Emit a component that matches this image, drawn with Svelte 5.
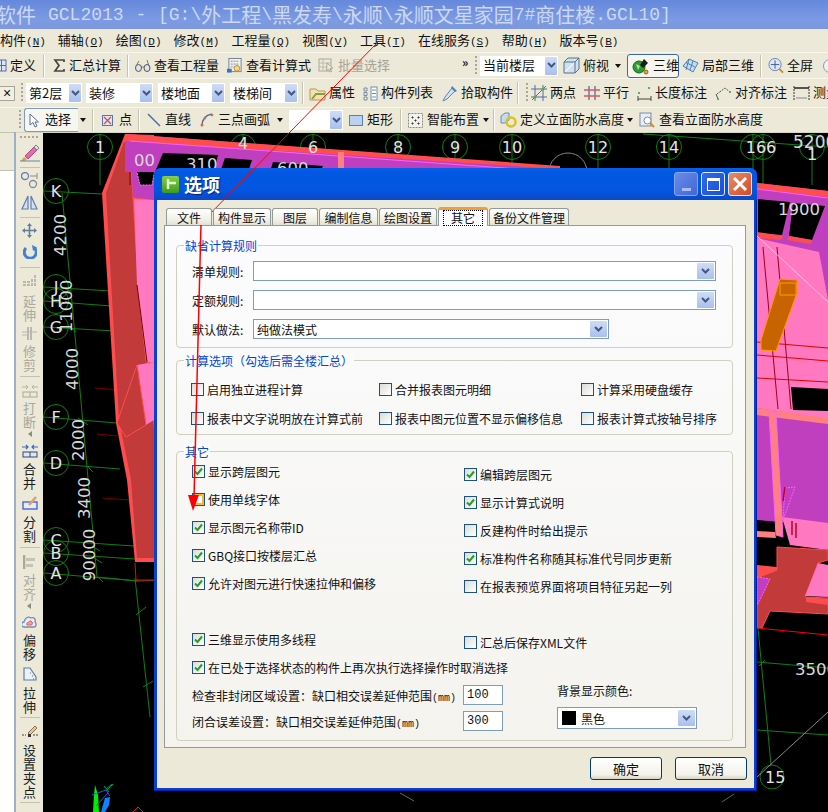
<script>
	const menus = [
		['构件', 'N'], ['辅轴', 'O'], ['绘图', 'D'], ['修改', 'M'], ['工程量', 'Q'],
		['视图', 'V'], ['工具', 'T'], ['在线服务', 'S'], ['帮助', 'H'], ['版本号', 'B']
	];

	const bar1 = [
		{ w: 51, iw: 15, icon: icoGrid, label: '定义' },
		{ kind: 'sep', w: 9 },
		{ w: 75, iw: 14, icon: icoSigma, label: '汇总计算' },
		{ kind: 'sep', w: 8 },
		{ w: 92, iw: 16, icon: icoGlasses, label: '查看工程量' },
		{ w: 91, iw: 16, icon: icoCalc, label: '查看计算式' },
		{ w: 144, iw: 17, icon: icoBatch, label: '批量选择', off: true },
		{ kind: 'more', w: 10 },
		{ kind: 'grip', w: 8 },
		{ kind: 'select', w: 78, text: '当前楼层' },
		{ kind: 'space', w: 5 },
		{ w: 64, iw: 17, icon: icoCube, label: '俯视', arrow: true },
		{ w: 52, iw: 18, icon: icoGlobe, label: '三维', on: true },
		{ kind: 'space', w: 3 },
		{ w: 78, iw: 17, icon: icoLocal, label: '局部三维' },
		{ kind: 'sep', w: 8 },
		{ w: 54, iw: 16, icon: icoZoom, label: '全屏' },
		{ w: 20, iw: 16, icon: icoRound }
	];

	const bar2 = [
		{ kind: 'closer', w: 15 },
		{ kind: 'space', w: 2 },
		{ kind: 'grip', w: 9 },
		{ kind: 'select', w: 56, text: '第2层' },
		{ kind: 'space', w: 4 },
		{ kind: 'select', w: 67, text: '装修' },
		{ kind: 'space', w: 5 },
		{ kind: 'select', w: 67, text: '楼地面' },
		{ kind: 'space', w: 5 },
		{ kind: 'select', w: 68, text: '楼梯间' },
		{ kind: 'space', w: 4 },
		{ kind: 'sep', w: 7 },
		{ w: 53, iw: 17, icon: icoFolder, label: '属性' },
		{ w: 79, iw: 16, icon: icoList, label: '构件列表' },
		{ w: 76, iw: 17, icon: icoDropper, label: '拾取构件' },
		{ kind: 'sep', w: 5 },
		{ kind: 'grip', w: 9 },
		{ w: 52, iw: 16, icon: icoTwoPt, label: '两点' },
		{ w: 54, iw: 17, icon: icoParallel, label: '平行' },
		{ w: 78, iw: 15, icon: icoLength, label: '长度标注' },
		{ w: 78, iw: 17, icon: icoAlign, label: '对齐标注' },
		{ w: 40, iw: 17, icon: icoMeasure, label: '测量' }
	];

	const bar3 = [
		{ kind: 'space', w: 16 },
		{ kind: 'grip', w: 8 },
		{ w: 54, iw: 16, icon: icoPointer, label: '选择', sel: true },
		{ kind: 'arrow', w: 14 },
		{ kind: 'sep', w: 10 },
		{ w: 36, iw: 11, gap: 6, icon: icoPoint, label: '点' },
		{ kind: 'sep', w: 9 },
		{ w: 53, iw: 14, gap: 4, icon: icoLine, label: '直线' },
		{ w: 89, iw: 14, gap: 4, icon: icoArc, label: '三点画弧', arrow: true },
		{ kind: 'select', w: 54, text: '' },
		{ kind: 'space', w: 6 },
		{ w: 51, iw: 14, gap: 4, icon: icoRect, label: '矩形' },
		{ kind: 'sep', w: 8 },
		{ w: 85, iw: 15, gap: 4, icon: icoSmart, label: '智能布置', arrow: true },
		{ kind: 'sep', w: 7 },
		{ w: 139, iw: 17, icon: icoRing, label: '定义立面防水高度', arrow: true },
		{ w: 130, iw: 16, gap: 4, icon: icoPage, label: '查看立面防水高度' }
	];

	const side = [
		{ kind: 'grip' },
		{ h: 24, icon: vBrush },
		{ kind: 'sep', h: 5 },
		{ h: 20, icon: vCopy },
		{ h: 24, icon: vMirror },
		{ kind: 'sep', h: 6 },
		{ h: 20, icon: vMove },
		{ h: 24, icon: vRotate },
		{ kind: 'sep', h: 6 },
		{ h: 24, icon: vExtend, text: '延伸', off: true },
		{ h: 22, icon: vTrim, text: '修剪', off: true },
		{ kind: 'sep', h: 9 },
		{ h: 20, icon: vBreak, text: '打断', off: true, arrow: true },
		{ h: 23, icon: vMerge, text: '合并' },
		{ h: 25, icon: vSplit, text: '分割' },
		{ kind: 'sep', h: 8 },
		{ h: 22, icon: vFlush, text: '对齐', off: true, arrow: true },
		{ h: 22, icon: vOffset, text: '偏移' },
		{ h: 25, icon: vStretch, text: '拉伸' },
		{ kind: 'sep', h: 7 },
		{ h: 22, icon: vGrip, text: '设置夹点' },
		{ kind: 'sep', h: 6 }
	];

	const tabs = [
		['文件', 46], ['构件显示', 58], ['图层', 46], ['编制信息', 59],
		['绘图设置', 58], ['其它', 50], ['备份文件管理', 80]
	];

	const calcOpts = [
		'启用独立进程计算', '合并报表图元明细', '计算采用硬盘缓存',
		'报表中文字说明放在计算式前', '报表中图元位置不显示偏移信息', '报表计算式按轴号排序'
	];

	const otherLeft = [
		{ t: '显示跨层图元', c: true },
		{ t: '使用单线字体', hot: true },
		{ t: '显示图元名称带ID', c: true },
		{ t: 'GBQ接口按楼层汇总', c: true },
		{ t: '允许对图元进行快速拉伸和偏移', c: true },
		null,
		{ t: '三维显示使用多线程', c: true },
		{ t: '在已处于选择状态的构件上再次执行选择操作时取消选择', c: true }
	];

	const otherRight = [
		{ t: '编辑跨层图元', c: true },
		{ t: '显示计算式说明', c: true },
		{ t: '反建构件时给出提示' },
		{ t: '标准构件名称随其标准代号同步更新', c: true },
		{ t: '在报表预览界面将项目特征另起一列' },
		null,
		{ t: '汇总后保存XML文件' }
	];

	const topAxes = [
		[100, '1'], [243, '4'], [313, '6'], [398, '8'], [455, '9'], [512, '10'],
		[598, '12'], [669, '14'], [753, ''], [763, ''], [812, '']
	];

	const leftAxes = [
		['K', 191, 102, 194], ['J', 287, 111, 291], ['H', 301, 112, 306], ['G', 327, 115, 331],
		['F', 417, 117, 423], ['D', 463, 120, 469], ['C', 540, 134, 546], ['B', 553, 135, 559], ['A', 573, 138, 581]
	];

	const dims = [
		['4200', 66, 235], ['11000', 72, 306], ['4000', 78, 369], ['2000', 84, 440], ['3400', 90, 498], ['90000', 95, 555]
	];
</script>

{#snippet chevron()}
	<span class="chev"><svg width="9" height="7" viewBox="0 0 9 7"><path d="M1 1l3.5 3.5L8 1" fill="none" stroke="#43587f" stroke-width="2" /></svg></span>
{/snippet}

{#snippet check(on, hot)}
	<span class="cb" class:hot>
		{#if on}<svg width="11" height="11" viewBox="0 0 11 11"><path d="M2 5.500l2.500 2.500L9 2.500" fill="none" stroke="#21a121" stroke-width="2" /></svg>{/if}
	</span>
{/snippet}

{#snippet icoGrid()}<svg width="15" height="15" viewBox="0 0 15 15"><rect x="1" y="2" width="13" height="11" fill="#dfe6f3" stroke="#4c6fb0" /><path d="M5 2v11M9.500 2v11M1 7.500h13" stroke="#4c6fb0" /></svg>{/snippet}
{#snippet icoSigma()}<svg width="12" height="13" viewBox="0 0 12 13"><path d="M11 3V1H2l4 5.500L2 12h9v-2" fill="none" stroke="#444" stroke-width="1.700" /></svg>{/snippet}
{#snippet icoGlasses()}<svg width="16" height="14" viewBox="0 0 16 14"><ellipse cx="3.500" cy="9" rx="3" ry="3.500" fill="#dfe3ec" stroke="#555" /><ellipse cx="12" cy="9" rx="3" ry="3.500" fill="#dfe3ec" stroke="#555" /><path d="M6.500 8h2.500M1 7l3-5M14 7l-2-6" stroke="#777" fill="none" /></svg>{/snippet}
{#snippet icoCalc()}<svg width="17" height="17" viewBox="0 0 17 17"><rect x="2" y="1" width="13" height="14" fill="#f1efe6" stroke="#6f7f9c" /><path d="M4 4h9M4 7h9M4 10h4" stroke="#7d8ba5" stroke-dasharray="2 1" /><circle cx="10.500" cy="11.500" r="3" fill="#f4d78a" stroke="#b98c2c" /><rect x="0" y="12" width="5" height="4" fill="#3d6fc4" /></svg>{/snippet}
{#snippet icoBatch()}<svg width="17" height="17" viewBox="0 0 17 17"><rect x="1" y="2" width="12" height="12" fill="none" stroke="#aaa89a" /><path d="M1 6h12M1 10h12M5 2v12" stroke="#bdbbac" /><path d="M9 6l6 5-3 .5 1.500 3-1.500.5-1.500-3-2 2z" fill="#ece9d8" stroke="#aaa89a" /></svg>{/snippet}
{#snippet icoCube()}<svg width="17" height="17" viewBox="0 0 17 17"><path d="M1 5l4-4h11v11l-4 4H1z" fill="#cfe2f2" stroke="#5d7187" /><path d="M1 5h11v11M12 5l4-4" fill="none" stroke="#5d7187" /><path d="M2 15l9-9" stroke="#fff" /></svg>{/snippet}
{#snippet icoGlobe()}<svg width="18" height="18" viewBox="0 0 18 18"><circle cx="7" cy="10" r="6" fill="#2e9a3c" stroke="#0e6a20" /><path d="M4 7l4 2-2 4z" fill="#b5e58f" /><path d="M12 2l4 4-5 5-3-3z" fill="#1c1c1c" /><circle cx="14" cy="15" r="2" fill="#e8a13c" stroke="#9b6414" /></svg>{/snippet}
{#snippet icoLocal()}<svg width="17" height="15" viewBox="0 0 17 15"><path d="M1 8l6-7 9 4-5 9z" fill="#c6dcf2" stroke="#4f7fb2" /><path d="M4 4.500l9 4.500M7 1l-3 11M11 3l-3 9" stroke="#4f7fb2" fill="none" /></svg>{/snippet}
{#snippet icoZoom()}<svg width="17" height="17" viewBox="0 0 17 17"><circle cx="7.500" cy="7.500" r="6.500" fill="#dce6f6" stroke="#6984ac" /><path d="M7.500 3v9M3 7.500h9" stroke="#3c5e94" /><path d="M12 12l4 4" stroke="#c68c38" stroke-width="2" /></svg>{/snippet}
{#snippet icoRound()}<svg width="16" height="16" viewBox="0 0 16 16"><circle cx="8" cy="8" r="6.500" fill="#f2f2f2" stroke="#8a97ad" /></svg>{/snippet}
{#snippet icoFolder()}<svg width="17" height="15" viewBox="0 0 17 15"><path d="M1 3h6l2 2h7v9H1z" fill="#f4e2a8" stroke="#b09a5e" /><path d="M3 13l4-5h9" fill="none" stroke="#7fa04e" stroke-width="2" /></svg>{/snippet}
{#snippet icoList()}<svg width="15" height="15" viewBox="0 0 15 15"><rect x="8" y="1" width="6" height="13" fill="#fff" stroke="#6c8fb6" /><path d="M9 4h4M9 7.500h4M9 11h4" stroke="#6c8fb6" /><path d="M1 2h3v3H1zM1 6.500h3v3H1zM1 11h3v3H1z" fill="#e8edf5" stroke="#7b8a9c" /></svg>{/snippet}
{#snippet icoDropper()}<svg width="16" height="17" viewBox="0 0 16 17"><path d="M10 3l3 3-8 8-4 2 2-4z" fill="#cfe3f7" stroke="#5f85b6" /><path d="M10 1l5 5-2 1-4-4z" fill="#4f7fba" /></svg>{/snippet}
{#snippet icoTwoPt()}<svg width="16" height="16" viewBox="0 0 16 16"><path d="M4 0v16M12 0v16M0 4h16M0 12h16" stroke="#5868a4" /><path d="M1 15L15 1" stroke="#d93a3a" /><circle cx="4" cy="12" r="1.500" fill="#5aa83c" /><circle cx="12" cy="4" r="1.500" fill="#5aa83c" /></svg>{/snippet}
{#snippet icoParallel()}<svg width="16" height="16" viewBox="0 0 16 16"><path d="M5 1v14M11 1v14" stroke="#6a78ad" stroke-width="1.500" /><path d="M0 5h16M0 11h16" stroke="#d85a5a" stroke-width="1.500" /></svg>{/snippet}
{#snippet icoLength()}<svg width="15" height="15" viewBox="0 0 15 15"><path d="M1 10v5M14 10v5M1 13h13" stroke="#444" /><rect x="11" y="1" width="2" height="2" fill="#58b458" /><rect x="1" y="6" width="2" height="2" fill="#58b458" /></svg>{/snippet}
{#snippet icoAlign()}<svg width="17" height="15" viewBox="0 0 17 15"><path d="M2 8l8-6 5 4" fill="none" stroke="#555" stroke-dasharray="2 1" /><path d="M3 13L1 8" stroke="#555" /><rect x="2" y="12" width="2" height="2" fill="#58b458" /><rect x="14" y="5" width="2" height="2" fill="#58b458" /></svg>{/snippet}
{#snippet icoMeasure()}<svg width="17" height="16" viewBox="0 0 17 16"><path d="M1 1v14M16 1v14" stroke="#333" stroke-dasharray="2 1" /><path d="M1 3h15" stroke="#222" stroke-width="1.500" /><path d="M3 13h11" stroke="#888" /></svg>{/snippet}
{#snippet icoPointer()}<svg width="10" height="15" viewBox="0 0 10 15"><path d="M1 1v11l3-2.500 2 4.500 2-1-2-4h3.500z" fill="#fff" stroke="#5a6e96" /></svg>{/snippet}
{#snippet icoPoint()}<svg width="11" height="11" viewBox="0 0 11 11"><rect x=".5" y=".5" width="10" height="10" fill="#dfe6f3" stroke="#5d74a8" /><path d="M2 2l7 7M9 2l-7 7" stroke="#d05050" stroke-width="1.300" /></svg>{/snippet}
{#snippet icoLine()}<svg width="14" height="14" viewBox="0 0 14 14"><path d="M1 1l12 12" stroke="#4c6fa8" stroke-width="1.500" /></svg>{/snippet}
{#snippet icoArc()}<svg width="14" height="14" viewBox="0 0 14 14"><path d="M2 13C2 6 6 2 12 1" fill="none" stroke="#4c6fa8" stroke-width="1.500" /><circle cx="2" cy="12" r="1.500" fill="#d06a50" /><circle cx="5" cy="5" r="1.300" fill="#d06a50" /><circle cx="12" cy="2" r="1.300" fill="#d06a50" /></svg>{/snippet}
{#snippet icoRect()}<svg width="14" height="11" viewBox="0 0 14 11"><rect x=".5" y=".5" width="13" height="10" fill="#bcd0f2" stroke="#5d7fb8" /></svg>{/snippet}
{#snippet icoSmart()}<svg width="15" height="15" viewBox="0 0 15 15"><rect x=".5" y=".5" width="14" height="14" fill="#f3f3ee" stroke="#8c8c86" stroke-dasharray="2 1" /><path d="M4 4h1v1H4zM10 4h1v1h-1zM4 10h1v1H4zM10 10h1v1h-1zM7 7h1v1H7z" stroke="#333" /></svg>{/snippet}
{#snippet icoRing()}<svg width="17" height="16" viewBox="0 0 17 16"><path d="M1 4l4-3h4v7l-4 3H1z" fill="#c7d8ef" stroke="#7489aa" /><circle cx="11" cy="10" r="4.500" fill="none" stroke="#d8c224" stroke-width="2.500" /></svg>{/snippet}
{#snippet icoPage()}<svg width="16" height="16" viewBox="0 0 16 16"><rect x="1" y="1" width="11" height="13" fill="#e8ecf4" stroke="#7d8ca8" /><circle cx="8.500" cy="8.500" r="3.500" fill="#fff" stroke="#7d8ca8" /><path d="M11 11l4 4" stroke="#c68c38" stroke-width="2" /></svg>{/snippet}

{#snippet vBrush()}<svg width="22" height="18" viewBox="0 0 22 18"><path d="M2 17l3-4 3 2-2 2z" fill="#e0a050" /><path d="M6 12l9-9 3 3-9 9z" fill="#e86aa6" stroke="#a84a7c" /><path d="M15 3l2-2 3 3-2 2z" fill="#d7e6f5" stroke="#6785a7" /><path d="M1 17h20" stroke="#6785a7" /></svg>{/snippet}
{#snippet vCopy()}<svg width="18" height="17" viewBox="0 0 18 17"><circle cx="4" cy="4" r="3.500" fill="#e4e8ef" stroke="#6b80a3" stroke-width="1.300" /><circle cx="12" cy="12" r="3.500" fill="#e4e8ef" stroke="#8d8d86" stroke-width="1.300" /><path d="M9 4h7M16 1v6" stroke="#8d8d86" fill="none" /></svg>{/snippet}
{#snippet vMirror()}<svg width="17" height="15" viewBox="0 0 17 15"><path d="M7 1L1 14h6zM10 1l6 13h-6z" fill="#d6e0f2" stroke="#5b7fb6" stroke-width="1.200" /></svg>{/snippet}
{#snippet vMove()}<svg width="15" height="15" viewBox="0 0 15 15"><path d="M7.500 0l2.500 3H8.300v3.700H12V5l3 2.500-3 2.500V8.300H8.300V12H10l-2.500 3L5 12h1.700V8.300H3V10L0 7.500 3 5v1.700h3.700V3H5z" fill="#5f7f9e" /></svg>{/snippet}
{#snippet vRotate()}<svg width="14" height="14" viewBox="0 0 14 14"><path d="M3 3a6 6 0 1 0 8.500 0" fill="none" stroke="#3e82d0" stroke-width="3" /><path d="M9 0l1 6 4-3.500z" fill="#3e82d0" /></svg>{/snippet}
{#snippet vExtend()}<svg width="15" height="15" viewBox="0 0 15 15"><path d="M13 0v12M1 7h7M1 10h7M10 4v8" stroke="#a9a89c" stroke-width="1.500" stroke-dasharray="3 1" fill="none" /></svg>{/snippet}
{#snippet vTrim()}<svg width="15" height="13" viewBox="0 0 15 13"><path d="M6 0v13M9 0v13" stroke="#a9a89c" stroke-width="1.500" /><path d="M0 5h15M0 8h6" stroke="#b8b7ab" /></svg>{/snippet}
{#snippet vBreak()}<svg width="16" height="14" viewBox="0 0 16 14"><path d="M0 3h6M10 3h6M4 1L6 3 4 5M12 1L10 3l2 2" stroke="#b4b3a7" fill="none" /><rect x="1" y="8" width="14" height="5" fill="none" stroke="#a9a89c" /><path d="M8 8v5" stroke="#a9a89c" /></svg>{/snippet}
{#snippet vMerge()}<svg width="16" height="14" viewBox="0 0 16 14"><path d="M0 3h6M10 3h6M4 1l2 2-2 2M12 1l-2 2 2 2" stroke="#3768c7" fill="none" stroke-width="1.200" /><rect x="1" y="8" width="14" height="5" fill="#dfe6f3" stroke="#33496f" /><path d="M8 8v5" stroke="#33496f" /></svg>{/snippet}
{#snippet vSplit()}<svg width="16" height="14" viewBox="0 0 16 14"><rect x="1" y="6" width="14" height="7" fill="#e6ecf8" stroke="#3d5fd0" stroke-width="1.300" /><path d="M7 9l7-8" stroke="#d7a46c" stroke-width="2.500" /></svg>{/snippet}
{#snippet vFlush()}<svg width="13" height="14" viewBox="0 0 13 14"><path d="M1 0v14" stroke="#a9a89c" stroke-width="2.500" /><rect x="3" y="3" width="9" height="3" fill="#c4c3b6" /><rect x="3" y="9" width="7" height="3" fill="#c4c3b6" /></svg>{/snippet}
{#snippet vOffset()}<svg width="15" height="12" viewBox="0 0 15 12"><path d="M2 11a2 2 0 0 1 0-5C3 2 6 0 9 2c3-1 5 1 4 4 2 2 1 5-1 5z" fill="#e8edf5" stroke="#6c8fb6" stroke-width="1.300" /><path d="M5 9c-1-2 1-3 2-3s0-2 2-1 2 4 0 4z" fill="#f29b9b" stroke="#d66" /></svg>{/snippet}
{#snippet vStretch()}<svg width="14" height="14" viewBox="0 0 14 14"><path d="M1 1h6l6 9v3H1z" fill="#edf1f7" stroke="#5b7fa9" stroke-width="1.200" /><path d="M9 9h1M10 12h1M7 6h1" stroke="#666" /></svg>{/snippet}
{#snippet vGrip()}<svg width="16" height="14" viewBox="0 0 16 14"><path d="M6 8l7-7 2 2-7 7z" fill="#e4c89a" stroke="#8a7350" /><path d="M0 10h4M11 10h5" stroke="#444" stroke-dasharray="2 1" /><rect x="6" y="9" width="3" height="3" fill="#333" /></svg>{/snippet}

{#snippet toolbar(items)}
	{#each items as it}
		{#if it.kind === 'sep'}
			<span class="cell sep" style="width:{it.w}px"></span>
		{:else if it.kind === 'space'}
			<span class="cell" style="width:{it.w}px"></span>
		{:else if it.kind === 'grip'}
			<span class="cell grip" style="width:{it.w}px"></span>
		{:else if it.kind === 'more'}
			<span class="cell more" style="width:{it.w}px">»</span>
		{:else if it.kind === 'arrow'}
			<span class="cell" style="width:{it.w}px"><i class="drop first"></i></span>
		{:else if it.kind === 'closer'}
			<span class="cell closer" style="width:{it.w}px">×</span>
		{:else if it.kind === 'select'}
			<span class="cell bar-select" style="width:{it.w}px"><span>{it.text}</span>{@render chevron()}</span>
		{:else}
			<span
				class="cell tool"
				class:off={it.off}
				class:on={it.on}
				class:sel={it.sel}
				style="width:{it.w}px;gap:{it.gap ?? 3}px"
			>
				<span class="ico" style="width:{it.iw}px">{@render it.icon()}</span>
				{#if it.label}<span class="nowrap lift">{it.label}</span>{/if}
				{#if it.arrow}<i class="drop"></i>{/if}
			</span>
		{/if}
	{/each}
{/snippet}

<div class="app">
	<header class="title">
		<span>软件</span><span class="m first">GCL2013 - [G:\</span><span>外工程</span><span class="m">\</span><span>黑发寿</span><span class="m">\</span><span>永顺</span><span class="m">\</span><span>永顺文星家园</span><span class="m">7#</span><span>商住楼</span><span class="m">.GCL10]</span>
	</header>

	<nav class="menu">
		{#each menus as [name, key]}
			<span class="menu-item">{name}<span class="k">(<u>{key}</u>)</span></span>
		{/each}
	</nav>

	<div class="bar bar1">{@render toolbar(bar1)}</div>
	<div class="bar bar2">{@render toolbar(bar2)}</div>
	<div class="bar bar3">{@render toolbar(bar3)}</div>

	<div class="main">
		<aside class="pane">
			<div class="pane-head"></div>
			<div class="pane-list"></div>
		</aside>

		<div class="vbar">
			{#each side as it}
				{#if it.kind === 'grip'}
					<span class="vgrip"></span>
				{:else if it.kind === 'sep'}
					<span class="vsep" style="height:{it.h}px"></span>
				{:else}
					<div class="vitem" class:off={it.off}>
						<span class="vico" style="height:{it.h}px">{@render it.icon()}</span>
						{#if it.text}
							{#each it.text as ch}<span class="vch">{ch}</span>{/each}
						{/if}
						{#if it.arrow}<i class="vdrop"></i>{/if}
					</div>
				{/if}
			{/each}
		</div>

		<div class="canvas">
			<svg width="785" height="679" viewBox="43 133 785 679" class="scene">
				<g fill="none" stroke="#0f7f0f">
					{#each topAxes as [x]}
						<circle cx={x} cy="147" r="12.500" />
						<path d="M{x} 134V185" />
					{/each}
					{#each leftAxes as [, y, x2, y2]}
						<circle cx="56" cy={y} r="12.500" />
						<path d="M44 {y}L{x2} {y2}" />
					{/each}
					<path d="M62 193L97 577M135 578L150 717" />
					<path d="M643 134L828 147" />
					<path d="M97 577L138 581L175 580" />
					<path d="M62 287l8 4M65 301l8 4M70 327l6 5M78 418l10 7M88 467l5 5M92 546l8 5M94 558l8 5M98 577l5 5" />
					<path d="M136 615l10-8M143 687l10-6" />
				</g>
				<circle cx="568" cy="172" r="19" fill="none" stroke="#888" />
				<path d="M95 388l25 2M97 434l20 2M103 498l27 2" stroke="#7a0000" fill="none" />

				<!-- building, left wing -->
				<polygon points="125,134 102,193 116,423 127,480 135,562 154,562 154,135" fill="#ff4d4d" />
				<polygon points="124,142 106,193 119,420 131,480 137,558 154,558 154,430 147,365 138,285 129,143" fill="#c23a3a" />
				<polygon points="130,141 154,144 154,200 133,197" fill="#bf3fbf" />
				<polygon points="134,199 154,200 154,362 146,362 137,285" fill="#ff78c0" />
				<polygon points="137,365 154,362 154,420 146,425" fill="#ff78c0" />
				<polygon points="137,365 117,423 126,437 146,425" fill="#c23a3a" stroke="#ff4d4d" />
				<polygon points="132,152 158,153 152,185 140,185" fill="#000" stroke="#ff78ff" stroke-dasharray="2 1" />
				<path d="M137 285L147 362M130 165v20" stroke="#7a0000" fill="none" />
				<path d="M135 563l1 17h18" stroke="#f00" fill="none" />

				<!-- top band -->
				<polygon points="125,134 560,167 560,172 125,172" fill="#bf3fbf" />
				<polygon points="125,134 560,166 560,169 125,141" fill="#ff4d4d" />
				<path d="M130 141L560 172" stroke="#ff60ff" fill="none" />
				<polygon points="163,153 218,155 214,172 155,172" fill="#000" />
				<polygon points="225,158 252,160 248,172 220,172" fill="#000" />
				<polygon points="273,162 323,166 320,172 270,172" fill="#000" />
				<rect x="338" y="152" width="6" height="20" fill="#ff8080" />
				<text x="134" y="166" class="num">00</text>
				<text x="186" y="170" class="num">310</text>
				<text x="277" y="174" class="num">600</text>

				<!-- right wing -->
				<polygon points="757,183 828,191 828,300 757,300" fill="#bf3fbf" />
				<polygon points="757,183 828,191 828,197 757,189" fill="#ff4d4d" />
				<path d="M757 189L828 198" stroke="#ff60ff" fill="none" />
				<polygon points="758,199 790,202 782,235 758,233" fill="#000" />
				<polygon points="793,203 825,206 812,240 789,236" fill="#000" />
				<polygon points="757,232 783,236 781,240 757,238" fill="#ff4d4d" />
				<polygon points="789,236 812,240 811,244 787,240" fill="#ff4d4d" />
				<polygon points="757,238 819,252 828,300 828,420 757,410" fill="#ff78c0" />
				<polygon points="791,387 828,389 828,411 793,410" fill="#000" />
				<path d="M757 342L828 348M757 355L828 361M757 378L828 382" stroke="#e00000" fill="none" />
				<path d="M763 247L778 409M777 247L791 409" stroke="#9b0020" fill="none" />
				<path d="M757 236L828 302" stroke="#ffc0f0" fill="none" />
				<polygon points="761,340 780,279 797,280 797,293 776,351 761,350" fill="#c86400" stroke="#ff9a00" />
				<path d="M780 283h16v12h-16z" fill="none" stroke="#ff9a00" />
				<polygon points="757,408 828,419 828,526 757,520" fill="#bf3fbf" />
				<polygon points="757,408 828,418 828,424 757,415" fill="#ff8080" />
				<polygon points="769,412 776,412 783,537 776,535" fill="#ff8080" stroke="#ff60ff" />
				<polygon points="757,531 775,532 776,538 757,537" fill="#ff8080" />
				<polygon points="782,517 828,523 828,550 790,545" fill="#ff78c0" />
				<polygon points="757,565 786,568 788,570 757,578" fill="#ff4d4d" />
				<polygon points="777,547 828,550 828,560 818,563 805,597 828,598 828,614 770,611 762,628 757,628 757,578 777,570" fill="#c23a3a" stroke="#ff4d4d" />
				<polygon points="818,563 828,565 828,597 805,596" fill="#ff78c0" />
				<path d="M806 597l22 2v6l-22-3z" fill="#ff4d4d" />
				<polygon points="757,577 770,579 760,600 757,605" fill="#bf3fbf" stroke="#ff60ff" stroke-dasharray="2 1" />
				<polygon points="785,488 795,487 783,520" fill="#bf3fbf" stroke="#ff60ff" stroke-dasharray="2 1" />
				<path d="M785 487l-2 14M792 521v14M796 523v15" stroke="#c00020" stroke-width="1.500" fill="none" />
				<path d="M757 628L828 635" stroke="#f00" fill="none" />
				<path d="M758 628L771 765M757 662L828 668M757 730L828 735M765 660l-6 6" stroke="#0f7f0f" fill="none" />
				<circle cx="772" cy="777" r="12" fill="none" stroke="#0f7f0f" />
				<path d="M757 777L828 712" stroke="#888" fill="none" />
				<text x="765" y="783" class="axis">15</text>
				<text x="795" y="675" class="num">3500</text>
				<text x="793" y="148" class="num big">5200</text>
				<text x="778" y="215" class="num">1900</text>

				{#each topAxes as [x, t]}
					{#if t && x !== 243}<text x={x} y="153" class="axis mid">{t}</text>{/if}
				{/each}
				<text x="243" y="149" class="axis mid">4</text>
				<text x="761" y="153" class="axis mid">166</text>
				<text x="812" y="160" class="axis mid">1</text>
				{#each leftAxes as [t, y]}
					<text x="56" y={y + 6} class="axis mid">{t}</text>
				{/each}
				{#each dims as [t, x, y]}
					<text {x} {y} class="num mid" transform="rotate(-90 {x} {y})">{t}</text>
				{/each}

				<!-- axis gizmo -->
				<polygon points="95,785 98,795 99,812 93,812 94,795" fill="#00ef00" />
				<polygon points="105,798 110,797 109,805 105,812 101,812" fill="#0a84ff" />
				<path d="M92 795l14-5 4 6M96 806l12-13M106 789l6-5" stroke="#2060e0" fill="none" />
				<path d="M107 790l6-6M104 786l5 6" stroke="#00b000" fill="none" />
				<path d="M133 812l5-5 5 5" stroke="#e02020" fill="none" />
				<path d="M400 793l14 8M722 802l12-8" stroke="#666" fill="none" />
			</svg>
		</div>
	</div>

	<section class="dialog">
		<div class="dlg-title">
			<span class="dlg-logo"><svg width="14" height="14" viewBox="0 0 14 14"><path d="M4 2v10M4 6h8" stroke="#e6f5cf" stroke-width="2.500" fill="none" /></svg></span>
			<span class="dlg-name">选项</span>
			<span class="win-btns">
				<span class="wb min"><i></i></span>
				<span class="wb max"><i></i></span>
				<span class="wb close">
					<svg width="16" height="16" viewBox="0 0 16 16"><path d="M2 2l12 12M14 2L2 14" stroke="#fff" stroke-width="3" /></svg>
				</span>
			</span>
		</div>

		<div class="dlg-body">
			<div class="tabs">
				{#each tabs as [name, w], i}
					<span class="tab" class:current={i === 5} style="width:{w}px"><span class:dotted={i === 5}>{name}</span></span>
				{/each}
			</div>

			<div class="panel">
				<div class="group g1">
					<span class="legend">缺省计算规则</span>
					<label class="field-row"><span>清单规则:</span><span class="combo wide">{@render chevron()}</span></label>
					<label class="field-row"><span>定额规则:</span><span class="combo wide">{@render chevron()}</span></label>
					<label class="field-row"><span>默认做法:</span><span class="combo mid-w"><span>纯做法模式</span>{@render chevron()}</span></label>
				</div>

				<div class="group g2">
					<span class="legend">计算选项（勾选后需全楼汇总）</span>
					{#each calcOpts as t}
						<label class="opt">{@render check(false)}{t}</label>
					{/each}
				</div>

				<div class="group g3">
					<span class="legend">其它</span>
					<div class="checks">
						<div class="check-col">
							{#each otherLeft as o}
								<div class="opt-row">
									{#if o}<label class="opt">{@render check(o.c, o.hot)}{o.t}</label>{/if}
								</div>
							{/each}
						</div>
						<div class="check-col right">
							{#each otherRight as o}
								<div class="opt-row">
									{#if o}<label class="opt">{@render check(o.c)}{o.t}</label>{/if}
								</div>
							{/each}
						</div>
					</div>
					<div class="bottom">
						<div class="ranges">
							<label class="range"><span>检查非封闭区域设置：缺口相交误差延伸范围<span class="mm">(mm)</span></span><span class="num-in">100</span></label>
							<label class="range"><span>闭合误差设置：缺口相交误差延伸范围<span class="mm">(mm)</span></span><span class="num-in">300</span></label>
						</div>
						<div class="bg-color">
							<span>背景显示颜色:</span>
							<span class="combo color"><span class="swatch"></span><span>黑色</span>{@render chevron()}</span>
						</div>
					</div>
				</div>
			</div>

			<div class="footer">
				<button>确定</button>
				<button>取消</button>
			</div>
		</div>
	</section>

	<!-- red markup drawn over the screenshot -->
	<svg class="markup" width="828" height="812" viewBox="0 0 828 812">
		<path d="M378 42L206 218" stroke="#f00" fill="none" />
		<polygon points="202,225 204,216 210,219" fill="#f00" />
		<path d="M201 224L194 498" stroke="#f00" stroke-width="1.500" fill="none" />
		<polygon points="188,495 199,495 193,511" fill="#f00" />
	</svg>
</div>

<style>
	:global(body) {
		margin: 0;
		background: #000;
	}

	.app {
		position: relative;
		width: 828px;
		height: 812px;
		overflow: hidden;
		display: flex;
		flex-direction: column;
		background: #ece9d8;
		color: #111;
		font-family: 'Noto Sans CJK SC', 'Liberation Sans', sans-serif;
		font-size: 13px;
	}

	.title {
		height: 29px;
		flex: none;
		display: flex;
		align-items: center;
		margin-left: -4px;
		background: linear-gradient(#6688dc, #7c9be4 70%, #7d97da);
		color: #cbd8f0;
		font-size: 20px;
		white-space: pre;
	}

	.m {
		font-family: 'Liberation Mono', monospace;
		font-size: 18px;
		word-spacing: 1px;
	}

	.m.first {
		margin-left: 12px;
	}

	.menu {
		height: 23px;
		flex: none;
		display: flex;
		align-items: center;
		gap: 12px;
		white-space: nowrap;
	}

	.menu-item {
		margin-top: -2px;
	}

	.k {
		font-family: 'Liberation Mono', monospace;
		font-size: 11px;
	}

	.bar {
		display: flex;
		align-items: center;
		flex: none;
		white-space: nowrap;
		border-top: 1px solid #f8f6ec;
		box-sizing: border-box;
	}

	.bar1 {
		height: 26px;
		margin-left: -8px;
	}

	.bar2 {
		height: 29px;
	}

	.bar3 {
		height: 26px;
		border-bottom: 1px solid #d8d4c0;
	}

	.cell {
		flex: none;
		height: 24px;
		display: flex;
		align-items: center;
		box-sizing: border-box;
	}

	.lift {
		margin-top: -3px;
	}

	.sep::before {
		content: '';
		width: 1px;
		height: 22px;
		background: #c5c2b0;
		border-right: 1px solid #fff;
	}

	.grip {
		justify-content: center;
	}

	.grip::before {
		content: '';
		width: 2px;
		height: 20px;
		background: repeating-linear-gradient(#a8a698 0 2px, transparent 2px 4px);
	}

	.more {
		font-size: 12px;
		font-weight: 700;
		align-items: flex-start;
		line-height: 16px;
	}

	.closer {
		height: 15px;
		border: 1px solid #a8a698;
		border-left: 0;
		background: #f2f0e4;
		justify-content: center;
		font-family: 'Liberation Sans', sans-serif;
		font-size: 14px;
		line-height: 1;
	}

	.bar-select {
		height: 20px;
		background: #fff;
		padding: 0 1px 0 3px;
		justify-content: space-between;
	}

	.bar-select > span:first-child {
		margin-top: -2px;
	}

	.chev {
		flex: none;
		width: 12px;
		height: 18px;
		display: flex;
		align-items: center;
		justify-content: center;
		background: linear-gradient(#cfdcf6, #a8c0ee);
		border-radius: 1px;
	}

	.ico {
		flex: none;
		display: flex;
		align-items: center;
		justify-content: center;
	}

	.nowrap {
		white-space: nowrap;
	}

	.tool.off {
		color: #a5a497;
	}

	.tool.on {
		background: #f6f5ee;
		border: 1px solid #3f6a9e;
		border-radius: 3px;
		height: 24px;
		padding-left: 4px;
	}

	.tool.sel {
		background: #f7f7f2;
		border: 1px solid #7f9db9;
		border-right: 0;
		border-radius: 3px 0 0 3px;
		padding-left: 1px;
		gap: 3px;
	}

	.drop {
		width: 0;
		height: 0;
		border: 3.500px solid transparent;
		border-top: 4px solid #111;
		border-bottom: 0;
		margin-left: auto;
		margin-right: 6px;
	}

	.drop.first {
		margin: 0 0 0 2px;
	}

	.main {
		flex: 1;
		min-height: 0;
		display: flex;
	}

	.pane {
		width: 16px;
		flex: none;
		display: flex;
		flex-direction: column;
		box-sizing: border-box;
		border-right: 2px solid #9fb0c6;
		margin-top: -1px;
	}

	.pane-head {
		height: 37px;
		background: #ece9d8;
		border-top: 1px solid #c5c2b0;
		border-bottom: 1px solid #c5c2b0;
	}

	.pane-list {
		flex: 1;
		background: #fff;
	}

	.vbar {
		width: 27px;
		flex: none;
		display: flex;
		flex-direction: column;
		align-items: center;
		color: #1c1c1c;
		background: #ece9d8;
		overflow: hidden;
	}

	.vgrip {
		width: 20px;
		height: 2px;
		margin: 3px 0;
		flex: none;
		background: repeating-linear-gradient(90deg, #a8a698 0 2px, transparent 2px 4px);
	}

	.vsep {
		width: 20px;
		flex: none;
		display: flex;
		align-items: center;
	}

	.vsep::before {
		content: '';
		width: 100%;
		height: 1px;
		background: #c5c2b0;
	}

	.vitem {
		display: flex;
		flex-direction: column;
		align-items: center;
		flex: none;
	}

	.vitem.off {
		color: #a9a89c;
	}

	.vico {
		display: flex;
		align-items: center;
		justify-content: center;
	}

	.vch {
		height: 14px;
		line-height: 14px;
		font-size: 13px;
	}

	.vdrop {
		width: 0;
		height: 0;
		margin: 2px 0;
		border: 3px solid transparent;
		border-right: 4px solid #8c8b80;
		border-left: 0;
	}

	.canvas {
		flex: 1;
		background: #000;
		min-width: 0;
	}

	.scene {
		display: block;
	}

	.axis {
		font-family: 'DejaVu Sans', sans-serif;
		font-size: 16px;
		fill: #e4e4e4;
	}

	.num {
		font-family: 'DejaVu Sans', sans-serif;
		font-size: 16.500px;
		fill: #d8d8d8;
	}

	.big {
		font-size: 17px;
	}

	.mid {
		text-anchor: middle;
	}

	.dialog {
		position: absolute;
		left: 154px;
		top: 168px;
		width: 603px;
		height: 623px;
		box-sizing: border-box;
		display: flex;
		flex-direction: column;
		background: #0a3fd0;
		border-radius: 7px 7px 0 0;
		font-size: 12px;
		color: #111;
		box-shadow: inset -1px -1px 0 #001ea0;
	}

	.dlg-title {
		height: 32px;
		flex: none;
		display: flex;
		align-items: center;
		padding: 0 5px 0 4px;
		border-radius: 7px 7px 0 0;
		background: linear-gradient(#0a5fe8, #0258e3 12%, #0356e0 70%, #0a48c8);
	}

	.dlg-logo {
		width: 17px;
		height: 17px;
		margin-left: 4px;
		border-radius: 2px;
		background: linear-gradient(#86cf4a, #3d9a1e);
		display: flex;
		align-items: center;
		justify-content: center;
	}

	.dlg-name {
		margin-left: 5px;
		font-size: 18px;
		font-weight: 700;
		color: #fff;
		text-shadow: 1px 1px 1px #0a1f80;
	}

	.win-btns {
		margin-left: auto;
		display: flex;
		gap: 3px;
	}

	.wb {
		width: 24px;
		height: 24px;
		box-sizing: border-box;
		border: 1px solid #dfe8fb;
		border-radius: 3px;
		display: flex;
		align-items: center;
		justify-content: center;
		background: linear-gradient(135deg, #2f6ae8, #1a50d8);
	}

	.wb.min {
		background: linear-gradient(135deg, #6d8ae6, #3f68d8);
		border-color: #86a3ee;
	}

	.wb.min i {
		width: 9px;
		height: 3px;
		background: #a9bbf0;
		margin-top: 10px;
	}

	.wb.max i {
		width: 13px;
		height: 13px;
		box-sizing: border-box;
		border: 1px solid #fff;
		border-top-width: 3px;
	}

	.wb.close {
		background: linear-gradient(135deg, #ec8a6a, #d24a22);
	}

	.dlg-body {
		flex: 1;
		min-height: 0;
		margin: 0 3px 3px;
		background: #ece9d8;
		display: flex;
		flex-direction: column;
		padding: 7px 9px 0 7px;
	}

	.tabs {
		height: 18px;
		flex: none;
		display: flex;
		gap: 1px;
		padding-left: 2px;
		position: relative;
		z-index: 1;
	}

	.tab {
		height: 17px;
		margin-top: 1px;
		box-sizing: border-box;
		display: flex;
		align-items: center;
		justify-content: center;
		white-space: nowrap;
		border: 1px solid #919b9c;
		border-bottom: 0;
		border-radius: 3px 3px 0 0;
		background: linear-gradient(#fff, #f0efe4 70%, #e4e2d4);
	}

	.tab.current {
		height: 19px;
		margin-top: 0;
		background: #fcfcfe;
		border-top: 3px solid #f0a032;
	}

	.dotted {
		outline: 1px dotted #000;
		padding: 0 7px;
		line-height: 14px;
	}

	.panel {
		height: 523px;
		width: 582px;
		box-sizing: border-box;
		border: 1px solid #919b9c;
		background: linear-gradient(#fcfcfe, #f4f3ee);
		padding: 19px 0 0 11px;
		flex: none;
	}

	.group {
		position: relative;
		width: 557px;
		box-sizing: border-box;
		border: 1px solid #d0d0bf;
		border-radius: 4px;
	}

	.legend {
		position: absolute;
		left: 7px;
		top: -8px;
		padding: 0 1px;
		color: #0046d5;
		background: #fbfbfa;
		line-height: 15px;
	}

	.g1 {
		height: 103px;
		padding: 15px 0 0 15px;
		display: flex;
		flex-direction: column;
		gap: 9px;
	}

	.field-row {
		display: grid;
		grid-template-columns: 61px auto;
		justify-content: start;
		align-items: center;
		height: 20px;
	}

	.combo {
		height: 20px;
		box-sizing: border-box;
		border: 1px solid #7f9db9;
		background: #fff;
		display: flex;
		align-items: center;
		padding: 0 1px 0 3px;
	}

	.combo .chev {
		margin-left: auto;
		width: 17px;
		height: 16px;
	}

	.wide {
		width: 463px;
	}

	.mid-w {
		width: 356px;
	}

	.g2 {
		margin-top: 12px;
		height: 75px;
		padding: 14px 0 0 14px;
		display: grid;
		grid-template-columns: 188px 202px 1fr;
		grid-auto-rows: 29px;
		align-items: center;
	}

	.opt {
		display: flex;
		align-items: center;
		gap: 3px;
		white-space: nowrap;
	}

	.cb {
		flex: none;
		width: 13px;
		height: 13px;
		box-sizing: border-box;
		border: 1px solid #1c5180;
		background: linear-gradient(135deg, #dcdcd7, #fff);
		display: flex;
		align-items: center;
		justify-content: center;
	}

	.cb.hot {
		background: #fff;
		box-shadow: inset 0 0 0 2px #f8b636;
	}

	.g3 {
		margin-top: 16px;
		height: 290px;
		padding: 5px 0 0 15px;
	}

	.checks {
		display: grid;
		grid-template-columns: 272px 1fr;
		height: 224px;
	}

	.check-col.right {
		padding-top: 3px;
	}

	.opt-row {
		height: 28px;
		display: flex;
		align-items: center;
	}

	.bottom {
		display: grid;
		grid-template-columns: 365px auto;
	}

	.ranges {
		display: flex;
		flex-direction: column;
		gap: 6px;
		padding-top: 4px;
	}

	.range {
		display: flex;
		align-items: center;
		justify-content: space-between;
		width: 311px;
		height: 20px;
	}

	.mm {
		font-family: 'Liberation Mono', monospace;
		font-size: 10px;
	}

	.num-in {
		width: 40px;
		height: 20px;
		box-sizing: border-box;
		border: 1px solid #7f9db9;
		background: #fff;
		padding-left: 3px;
		line-height: 18px;
		font-family: 'Liberation Mono', monospace;
	}

	.bg-color {
		display: flex;
		flex-direction: column;
		gap: 8px;
		padding-top: 1px;
	}

	.color {
		width: 140px;
		height: 22px;
		gap: 5px;
		padding-left: 4px;
	}

	.swatch {
		width: 14px;
		height: 14px;
		background: #000;
	}

	.footer {
		display: flex;
		justify-content: flex-end;
		gap: 13px;
		padding: 9px 0 0 0;
		margin-right: -2px;
	}

	button {
		width: 72px;
		height: 23px;
		padding: 0;
		border: 1px solid #003c74;
		border-radius: 3px;
		background: linear-gradient(#fff, #f3f2ea 80%, #d8d4c4);
		font: inherit;
		font-size: 13px;
		color: #111;
	}

	.markup {
		position: absolute;
		left: 0;
		top: 0;
		pointer-events: none;
	}
</style>
